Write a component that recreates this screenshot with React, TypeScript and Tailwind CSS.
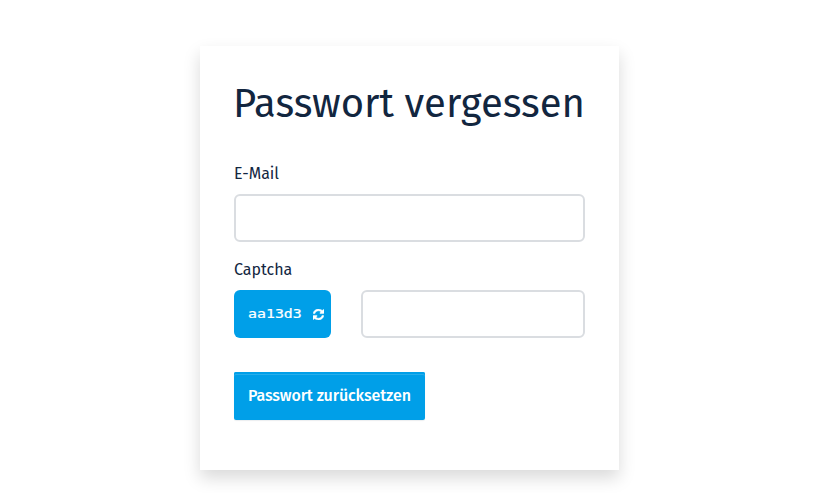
const inputClass =
  "block h-12 w-full rounded-md border-2 border-[#dadde1] bg-white px-3 text-base outline-none";

function RefreshIcon() {
  return (
    <svg
      viewBox="128 128 1536 1536"
      className="size-[11px]"
      fill="currentColor"
      stroke="currentColor"
      strokeWidth="70"
      aria-hidden="true"
    >
      <path d="M1639 1056q0 5-1 7-64 268-268 434.5t-478 166.5q-146 0-282.5-55t-243.5-157l-129 129q-19 19-45 19t-45-19-19-45v-448q0-26 19-45t45-19h448q26 0 45 19t19 45-19 45l-137 137q71 66 161 102t187 36q134 0 250-65t186-179q11-17 53-117 8-23 30-23h192q13 0 22.5 9.5t9.5 22.5zm25-800v448q0 26-19 45t-45 19h-448q-26 0-45-19t-19-45 19-45l138-138q-148-137-349-137-134 0-250 65t-186 179q-11 17-53 117-8 23-30 23h-199q-13 0-22.5-9.5t-9.5-22.5v-7q65-268 270-434.5t480-166.5q146 0 284 55.5t245 156.5l130-129q19-19 45-19t45 19 19 45z" />
    </svg>
  );
}

export default function App() {
  return (
    <main className="flex h-[493px] justify-center overflow-hidden bg-white pt-[46px] pr-3 font-['Fira_Sans','Noto_Sans',sans-serif] text-[#12263f]">
      <form className="h-[424px] w-[419px] bg-white px-[34px] pt-[34px] shadow-[0_8px_16px_rgba(0,0,0,0.15)]">
        <h1 className="-ml-px h-12 text-[40px] leading-[48px] whitespace-nowrap">
          Passwort vergessen
        </h1>

        {/* E-mail */}
        <label htmlFor="email" className="mt-[34px] block h-6 text-base leading-6">
          E-Mail
        </label>
        <input id="email" type="email" className={`mt-2 ${inputClass}`} />

        {/* Captcha */}
        <label htmlFor="captcha" className="mt-4 block h-6 text-base leading-6">
          Captcha
        </label>
        <div className="mt-2 flex gap-[30px]">
          <button
            type="button"
            aria-label="Captcha"
            className="flex h-12 w-[97px] shrink-0 items-center justify-between rounded-md bg-[#009fe8] pr-[7px] pl-[14px] text-white"
          >
            <span className="w-[44px] origin-left scale-x-[1.24] text-left font-['DejaVu_Sans_Mono',monospace] text-xs [-webkit-text-stroke:0.2px_white]">
              aa13d3
            </span>
            <RefreshIcon />
          </button>
          <input id="captcha" type="text" className={inputClass} />
        </div>

        <button
          type="submit"
          className="mt-[34px] block h-12 w-[191px] rounded-xs bg-[#009fe8] pl-[14px] text-left text-base font-medium tracking-[-0.1px] whitespace-nowrap text-white shadow-[inset_0_2px_0_#009fe8,inset_0_3px_0_rgba(255,255,255,0.15),0_1px_1px_rgba(18,38,63,0.08)]"
        >
          Passwort zurücksetzen
        </button>
      </form>
    </main>
  );
}
